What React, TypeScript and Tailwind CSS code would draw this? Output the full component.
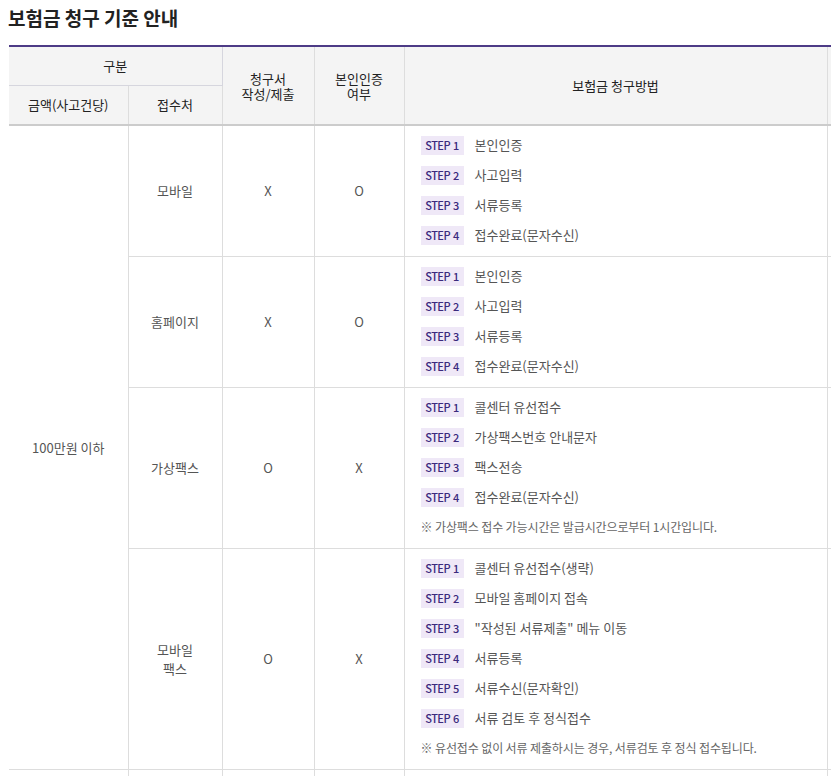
const steps = {
  mobile: ["본인인증", "사고입력", "서류등록", "접수완료(문자수신)"],
  web: ["본인인증", "사고입력", "서류등록", "접수완료(문자수신)"],
  vfax: ["콜센터 유선접수", "가상팩스번호 안내문자", "팩스전송", "접수완료(문자수신)"],
  mfax: [
    "콜센터 유선접수(생략)",
    "모바일 홈페이지 접속",
    "\"작성된 서류제출\" 메뉴 이동",
    "서류등록",
    "서류수신(문자확인)",
    "서류 검토 후 정식접수",
  ],
};

function StepList({ items, note }: { items: string[]; note?: string }) {
  return (
    <div className="pt-[4px] pb-[6px] pl-4 text-left">
      {items.map((s, i) => (
        <div key={i} className="flex h-[30px] items-center">
          <span className="inline-flex h-[19px] w-[43px] items-center justify-center gap-[3px] bg-[#efe8f7] text-[11px] font-medium tracking-[-0.05em] text-[#3b2a7d]">
            <span>STEP</span>
            <span>{i + 1}</span>
          </span>
          <span className="ml-[11px] text-[13px] text-[#555]">{s}</span>
        </div>
      ))}
      {note && (
        <div className="flex h-[30px] items-center text-[12px] tracking-[-0.01em] text-[#666]">{note}</div>
      )}
    </div>
  );
}

const td = "border-r border-b border-[#dddddd] text-center align-middle text-[13px] text-[#555]";
const thLow = "border-r border-b-2 border-[#dddddd] border-b-[#cccccc] font-normal";

export default function App() {
  return (
    <div
      className="h-[776px] w-[831px] overflow-hidden bg-white"
      style={{ fontFamily: '"Noto Sans CJK KR", "Noto Sans", sans-serif' }}
    >
      <h2 className="pl-2 pt-[5px] text-[19px] leading-[26px] font-bold text-[#222]">
        보험금 청구 기준 안내
      </h2>
      <div className="mt-[14px] ml-[9px]">
        <table className="w-[918px] table-fixed border-collapse border-t-2 border-[#4d3b86]">
          <colgroup>
            <col className="w-[119px]" />
            <col className="w-[94px]" />
            <col className="w-[92px]" />
            <col className="w-[90px]" />
            <col className="w-[423px]" />
            <col className="w-[100px]" />
          </colgroup>
          <thead className="bg-[#f4f4f4] text-[13px] text-[#222]">
            <tr className="h-[39px]">
              <th colSpan={2} className="border-r border-b border-[#d6d6de] font-normal">
                구분
              </th>
              <th rowSpan={2} className={`${thLow} leading-[15px]`}>
                청구서
                <br />
                작성/제출
              </th>
              <th rowSpan={2} className={`${thLow} leading-[15px]`}>
                본인인증
                <br />
                여부
              </th>
              <th rowSpan={2} className={thLow}>
                보험금 청구방법
              </th>
              <th rowSpan={2} className="border-b-2 border-b-[#cccccc] font-normal"></th>
            </tr>
            <tr className="h-[40px]">
              <th className={thLow}>금액(사고건당)</th>
              <th className={thLow}>접수처</th>
            </tr>
          </thead>
          <tbody>
            <tr>
              <td rowSpan={4} className={td}>
                100만원 이하
              </td>
              <td className={td}>모바일</td>
              <td className={td}>X</td>
              <td className={td}>O</td>
              <td className={td}>
                <StepList items={steps.mobile} />
              </td>
              <td className="border-b border-[#dddddd]"></td>
            </tr>
            <tr>
              <td className={td}>홈페이지</td>
              <td className={td}>X</td>
              <td className={td}>O</td>
              <td className={td}>
                <StepList items={steps.web} />
              </td>
              <td className="border-b border-[#dddddd]"></td>
            </tr>
            <tr>
              <td className={td}>가상팩스</td>
              <td className={td}>O</td>
              <td className={td}>X</td>
              <td className={td}>
                <StepList items={steps.vfax} note="※ 가상팩스 접수 가능시간은 발급시간으로부터 1시간입니다." />
              </td>
              <td className="border-b border-[#dddddd]"></td>
            </tr>
            <tr>
              <td className={`${td} leading-[19px]`}>
                모바일
                <br />
                팩스
              </td>
              <td className={td}>O</td>
              <td className={td}>X</td>
              <td className={td}>
                <StepList
                  items={steps.mfax}
                  note="※ 유선접수 없이 서류 제출하시는 경우, 서류검토 후 정식 접수됩니다."
                />
              </td>
              <td className="border-b border-[#dddddd]"></td>
            </tr>
            <tr className="h-[60px]">
              <td className={td}></td>
              <td className={td}></td>
              <td className={td}></td>
              <td className={td}></td>
              <td className={td}></td>
              <td className="border-b border-[#dddddd]"></td>
            </tr>
          </tbody>
        </table>
      </div>
    </div>
  );
}
